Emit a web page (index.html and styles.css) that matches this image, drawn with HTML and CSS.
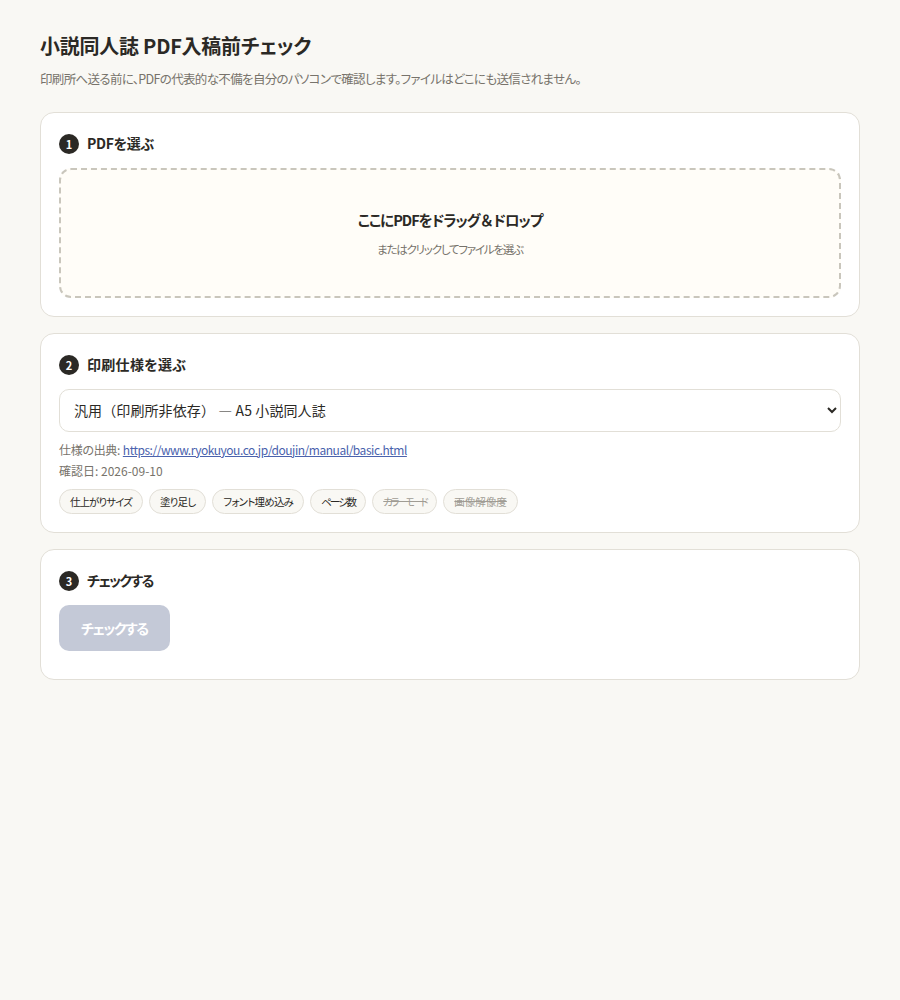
FILE: index.html
```html
<!DOCTYPE html>
<html lang="ja">
<head>
    <meta charset="UTF-8">
    <meta name="viewport" content="width=device-width, initial-scale=1.0">
    <title>小説同人誌 PDF入稿前チェック</title>
    <link rel="stylesheet" href="styles.css">
</head>
<body>
    <main class="container">
        <h1>小説同人誌 PDF入稿前チェック</h1>
        <p class="lead">印刷所へ送る前に、PDFの代表的な不備を自分のパソコンで確認します。ファイルはどこにも送信されません。</p>

        <section class="card">
            <h2 class="step-title"><span class="step-num">1</span><span class="title-latin">PDFを選ぶ</span></h2>
            <div class="dropzone">
                <div class="drop-main">ここにPDFをドラッグ<span class="amp">＆</span>ドロップ</div>
                <div class="drop-sub">またはクリックしてファイルを選ぶ</div>
            </div>
        </section>

        <section class="card">
            <h2 class="step-title"><span class="step-num">2</span><span class="title-kanji">印刷仕様を選ぶ</span></h2>
            <select class="spec-select">
                <option>汎用（印刷所非依存） — A5 小説同人誌</option>
            </select>
            <p class="spec-source"><span class="source-label">仕様の出典:</span> <a href="#">https://www.ryokuyou.co.jp/doujin/manual/basic.html</a></p>
            <p class="spec-date">確認日: 2026-09-10</p>
            <div class="chips">
                <span class="chip chip-size">仕上がりサイズ</span>
                <span class="chip">塗り足し</span>
                <span class="chip">フォント埋め込み</span>
                <span class="chip chip-pages">ページ数</span>
                <span class="chip chip-off chip-color">カラーモード</span>
                <span class="chip chip-off chip-kanji">画像解像度</span>
            </div>
        </section>

        <section class="card">
            <h2 class="step-title"><span class="step-num">3</span><span class="title-kana">チェックする</span></h2>
            <button class="check-button" disabled>チェックする</button>
        </section>
    </main>
</body>
</html>
```

FILE: styles.css
```css
body {
    margin: 0;
    background-color: #f9f8f4;
    color: #2b2925;
    font-family: "Noto Sans CJK JP", "Noto Sans", sans-serif;
    font-feature-settings: "palt";
}

.container {
    padding: 32px 40px;
}

h1 {
    margin: 0 0 9px;
    font-size: 20px;
    line-height: 28px;
    font-weight: 700;
    letter-spacing: -0.25px;
}

.lead {
    margin: 0 0 23px;
    font-size: 12.5px;
    line-height: 20px;
    letter-spacing: -0.66px;
    color: #77736b;
}

.card {
    background-color: #fff;
    border: 1px solid #e2dfd7;
    border-radius: 14px;
    padding: 18px;
    margin-bottom: 16px;
}

.step-title {
    display: flex;
    align-items: center;
    gap: 8px;
    margin: 0 0 13px;
    font-size: 14px;
    line-height: 24px;
    font-weight: 700;
}

.title-latin {
    letter-spacing: -0.3px;
}

.title-kanji {
    letter-spacing: 0.3px;
}

.title-kana {
    letter-spacing: -1.6px;
}

.step-num {
    display: flex;
    align-items: center;
    justify-content: center;
    width: 20px;
    height: 20px;
    margin-top: 2px;
    border-radius: 50%;
    background-color: #2b2925;
    color: #fff;
    font-size: 11px;
    line-height: 20px;
    letter-spacing: 0;
}

.dropzone {
    box-sizing: border-box;
    height: 130px;
    border: 2px dashed #c9c6bc;
    border-radius: 12px;
    background-color: #fffdf8;
    padding-top: 38px;
    text-align: center;
}

.drop-main {
    font-size: 14.5px;
    line-height: 24px;
    font-weight: 700;
    letter-spacing: -1px;
}

.amp {
    font-feature-settings: normal;
}

.drop-sub {
    margin-top: 8px;
    font-size: 11.5px;
    line-height: 18px;
    letter-spacing: -1.2px;
    color: #77736b;
}

.spec-select {
    display: block;
    box-sizing: border-box;
    width: 100%;
    height: 43px;
    padding: 0 10px 2px;
    background-color: #fff;
    border: 1px solid #e2dfd7;
    border-radius: 10px;
    color: #2b2925;
    font-family: inherit;
    font-size: 14px;
    letter-spacing: 0.1px;
}

.spec-source,
.spec-date {
    margin: 0;
    font-size: 12px;
    line-height: 21px;
    color: #77736b;
}

.spec-source {
    margin-top: 7px;
}

.source-label {
    letter-spacing: -0.3px;
}

.spec-source a {
    color: #4a62ad;
    letter-spacing: -0.47px;
}

.chips {
    display: flex;
    gap: 6px;
    margin-top: 8px;
}

.chip {
    box-sizing: border-box;
    height: 25px;
    padding: 0 10px;
    background-color: #f9f8f4;
    border: 1px solid #e2dfd7;
    border-radius: 13px;
    font-size: 10.5px;
    line-height: 23px;
    letter-spacing: -0.8px;
}

.chip-size {
    letter-spacing: -0.95px;
}

.chip-pages {
    letter-spacing: -1.85px;
}

.chip-color {
    letter-spacing: -2.45px;
}

.chip-kanji {
    letter-spacing: 0;
}

.chip-off {
    color: #a09c94;
    text-decoration: line-through;
}

.check-button {
    display: block;
    height: 46px;
    padding: 0 22px;
    margin-bottom: 10px;
    background-color: #c4c9d7;
    border: none;
    border-radius: 10px;
    color: #fff;
    font-family: inherit;
    font-feature-settings: inherit;
    font-size: 14px;
    font-weight: 700;
    letter-spacing: -1.45px;
}
```
